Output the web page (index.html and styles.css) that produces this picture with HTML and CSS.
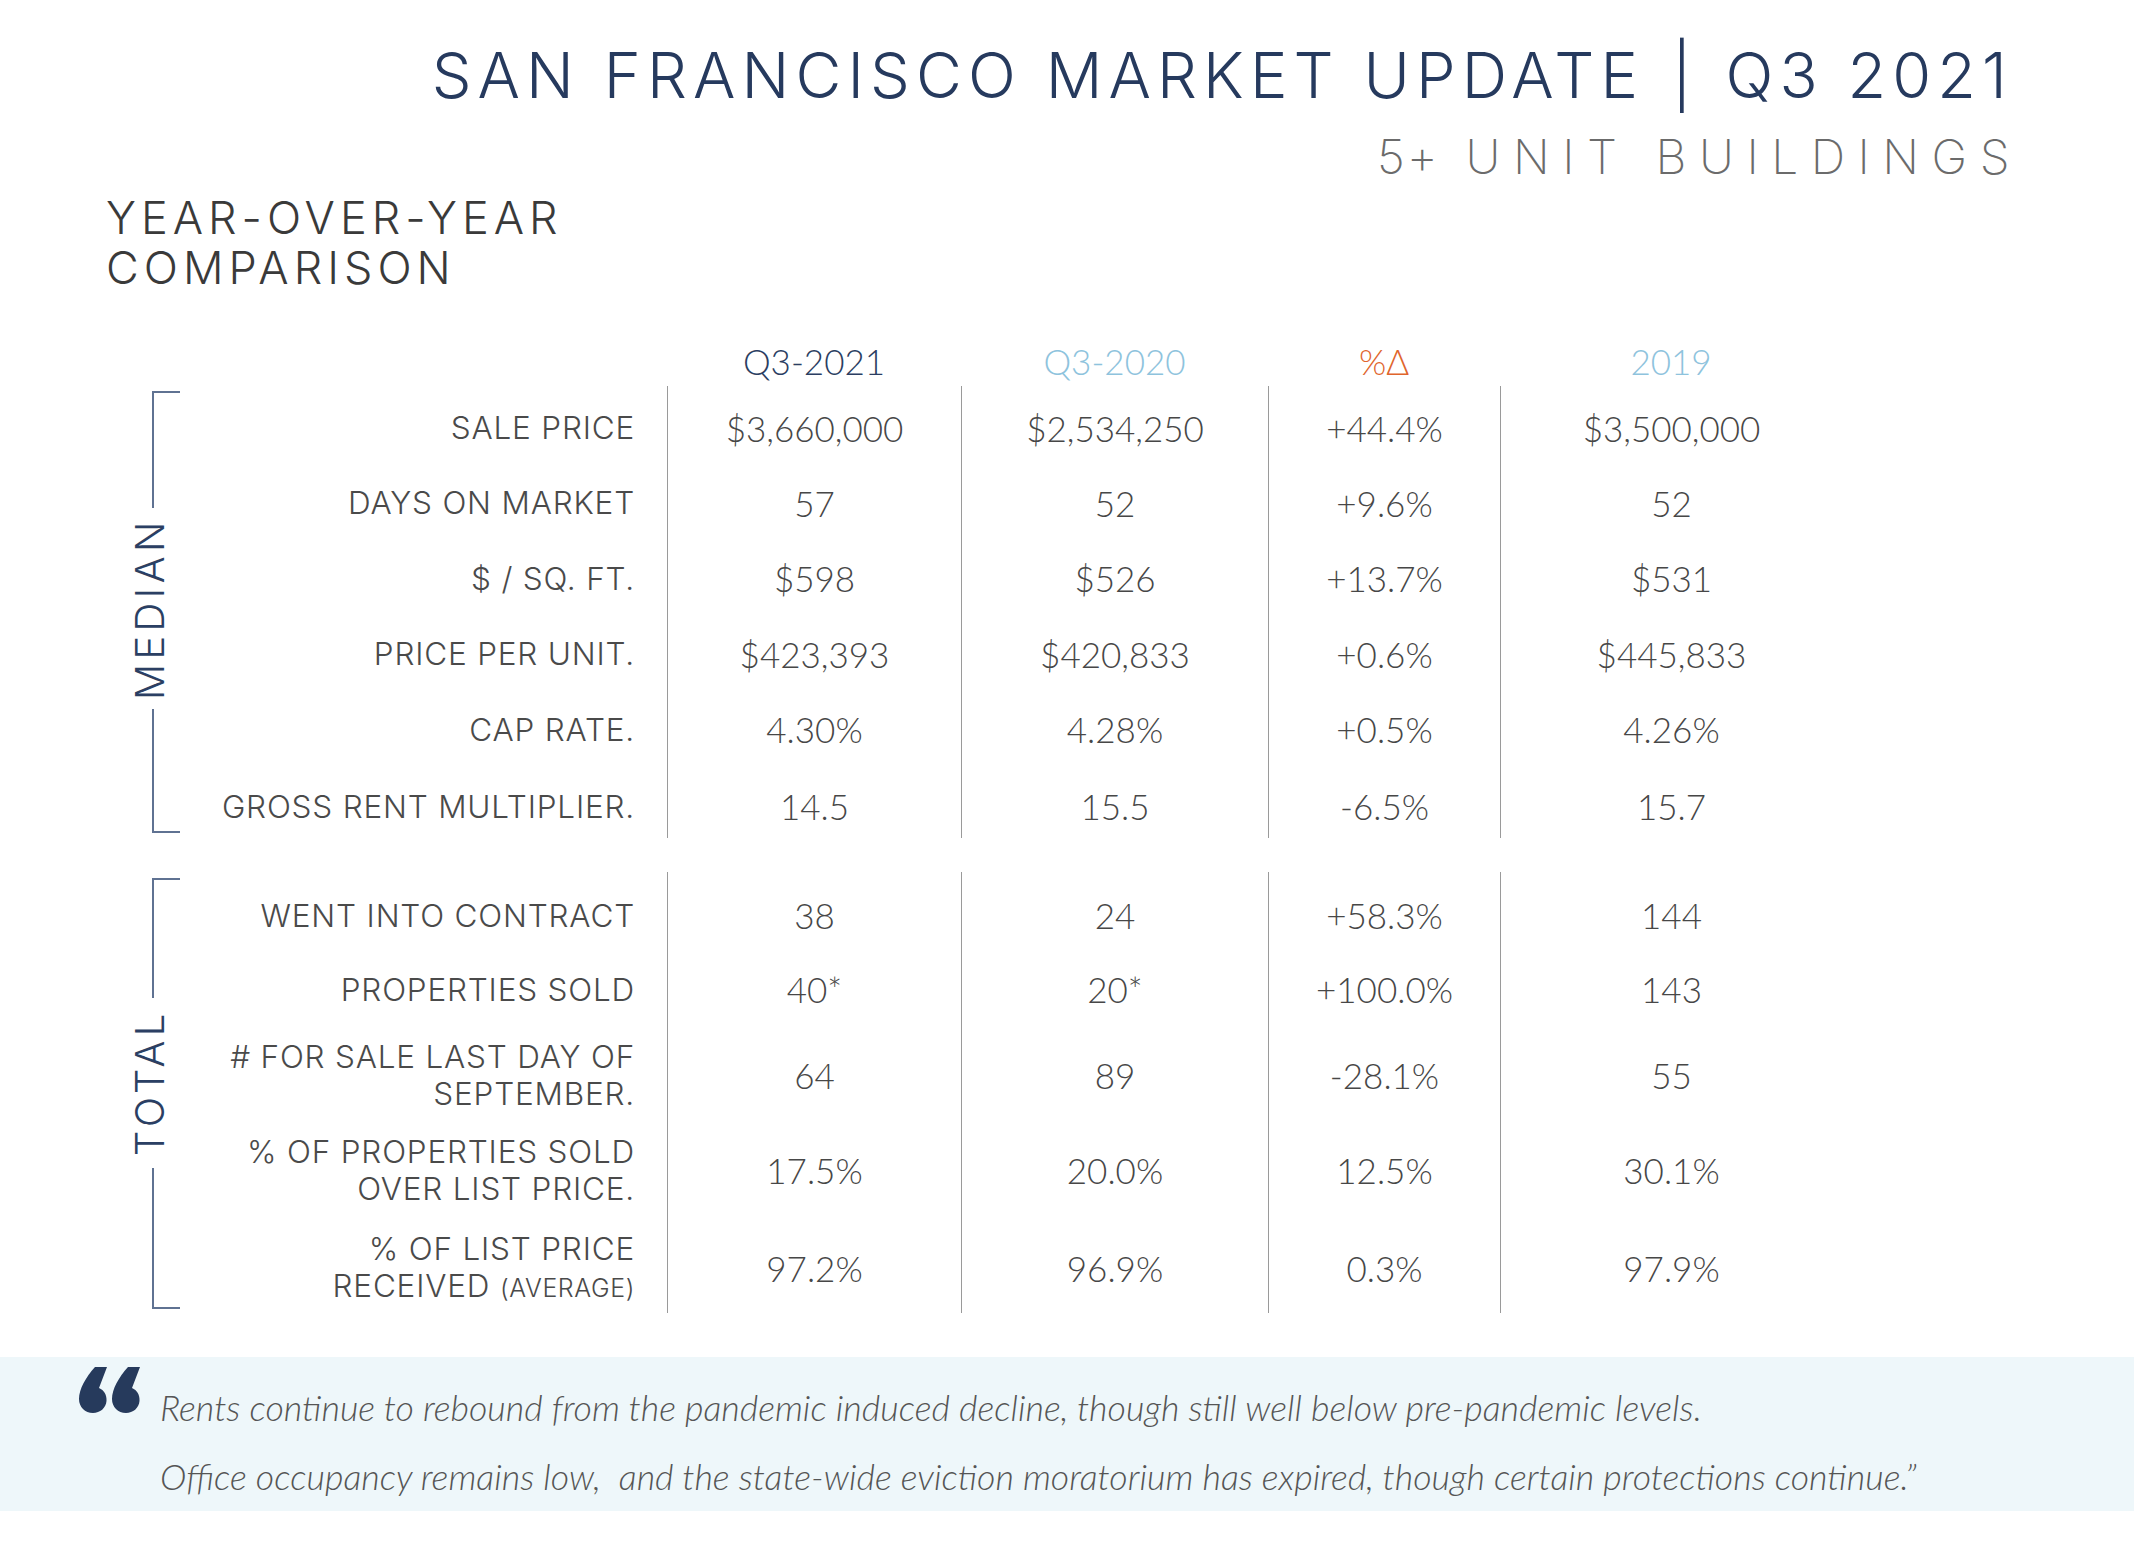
FILE: index.html
```html
<!DOCTYPE html>
<html lang="en">
<head>
<meta charset="utf-8">
<title>San Francisco Market Update | Q3 2021</title>
<link rel="stylesheet" href="styles.css">
</head>
<body>
<div class="page">
  <header class="masthead">
    <h1 class="title">SAN FRANCISCO MARKET UPDATE <span class="pipe">|</span> Q3 2021</h1>
    <p class="subtitle"><span class="tight">5+</span> UNIT BUILDINGS</p>
  </header>

  <h2 class="section-title">YEAR-OVER-YEAR<br>COMPARISON</h2>

  <section class="table">
    <div class="col-heads">
      <div></div>
      <div class="ch ch-current">Q3-2021</div>
      <div class="ch ch-prior">Q3-2020</div>
      <div class="ch ch-change">%Δ</div>
      <div class="ch ch-prior">2019</div>
    </div>

    <div class="group group-median">
      <div class="bracket">
        <div class="seg seg-top"></div>
        <div class="vlabel">MEDIAN</div>
        <div class="seg seg-bottom"></div>
      </div>
      <div class="rows rows-median">
        <div class="label"><span>SALE PRICE</span></div>
        <div class="val">$3,660,000</div><div class="val">$2,534,250</div><div class="val">+44.4%</div><div class="val">$3,500,000</div>

        <div class="label"><span>DAYS ON MARKET</span></div>
        <div class="val">57</div><div class="val">52</div><div class="val">+9.6%</div><div class="val">52</div>

        <div class="label"><span>$ / SQ. FT.</span></div>
        <div class="val">$598</div><div class="val">$526</div><div class="val">+13.7%</div><div class="val">$531</div>

        <div class="label"><span>PRICE PER UNIT.</span></div>
        <div class="val">$423,393</div><div class="val">$420,833</div><div class="val">+0.6%</div><div class="val">$445,833</div>

        <div class="label"><span>CAP RATE.</span></div>
        <div class="val">4.30%</div><div class="val">4.28%</div><div class="val">+0.5%</div><div class="val">4.26%</div>

        <div class="label"><span>GROSS RENT MULTIPLIER.</span></div>
        <div class="val">14.5</div><div class="val">15.5</div><div class="val">-6.5%</div><div class="val">15.7</div>
      </div>
    </div>

    <div class="group group-total">
      <div class="bracket">
        <div class="seg seg-top"></div>
        <div class="vlabel">TOTAL</div>
        <div class="seg seg-bottom"></div>
      </div>
      <div class="rows rows-total">
        <div class="label"><span>WENT INTO CONTRACT</span></div>
        <div class="val">38</div><div class="val">24</div><div class="val">+58.3%</div><div class="val">144</div>

        <div class="label"><span>PROPERTIES SOLD</span></div>
        <div class="val">40*</div><div class="val">20*</div><div class="val">+100.0%</div><div class="val">143</div>

        <div class="label"><span># FOR SALE LAST DAY OF<br>SEPTEMBER.</span></div>
        <div class="val">64</div><div class="val">89</div><div class="val">-28.1%</div><div class="val">55</div>

        <div class="label"><span>% OF PROPERTIES SOLD<br>OVER LIST PRICE.</span></div>
        <div class="val">17.5%</div><div class="val">20.0%</div><div class="val">12.5%</div><div class="val">30.1%</div>

        <div class="label"><span>% OF LIST PRICE<br>RECEIVED <small class="small">(AVERAGE)</small></span></div>
        <div class="val">97.2%</div><div class="val">96.9%</div><div class="val">0.3%</div><div class="val">97.9%</div>
      </div>
    </div>
  </section>

  <section class="quote">
    <svg class="quote-mark" viewBox="0 0 63 46" aria-hidden="true">
      <path d="M17 0H29L21 21C26 23 29 28 28.5 34C28 41 22 46 15 46C7 46 1 40 1 32C1 22 8 10 17 0Z M50 0H62L54 21C59 23 62 28 61.5 34C61 41 55 46 48 46C40 46 34 40 34 32C34 22 41 10 50 0Z" fill="#263a5c"/>
    </svg>
    <p class="quote-text">Rents continue to rebound from the pandemic induced decline, though still well below pre-pandemic levels.<br>Office occupancy remains low,&nbsp; and the state-wide eviction moratorium has expired, though certain protections continue.”</p>
  </section>
</div>
</body>
</html>
```

FILE: styles.css
```css
* { box-sizing: border-box; }

html, body {
  margin: 0;
  padding: 0;
  background: #ffffff;
}

body {
  width: 2134px;
  height: 1560px;
  overflow: hidden;
  font-family: "Inter", "Liberation Sans", sans-serif;
}

.page {
  padding-top: 37px;
}

/* ---------- masthead ---------- */
.masthead {
  display: flex;
  flex-direction: column;
  align-items: flex-end;
  padding-right: 121px;
}

.title {
  margin: 0;
  font-family: "Inter", "Liberation Sans", sans-serif;
  font-weight: 300;
  font-size: 63px;
  line-height: 76px;
  letter-spacing: 6.1px;
  color: #263a5e;
  white-space: nowrap;
}

.pipe {
  margin: 0 4px;
}

.subtitle {
  margin: 15px -9px 0 0;
  font-weight: 200;
  font-size: 48px;
  line-height: 58px;
  letter-spacing: 12.5px;
  color: #6b6b6b;
  white-space: nowrap;
}

.subtitle .tight {
  letter-spacing: 2px;
}

.section-title {
  margin: 7px 0 0 106px;
  font-weight: 300;
  font-size: 45px;
  line-height: 50px;
  letter-spacing: 5px;
  color: #3a3a3a;
}

/* ---------- table ---------- */
.table {
  margin-top: 37px;
}

.col-heads {
  display: grid;
  grid-template-columns: 667px 294px 307px 232px 342px;
  height: 56px;
  padding-top: 6px;
  align-items: center;
  font-family: "Lato", "Liberation Sans", sans-serif;
  font-weight: 300;
  font-size: 35px;
  text-align: center;
}

.ch-current { color: #2b3e62; }
.ch-prior { color: #8ec3dd; }
.ch-change { color: #e0652c; }

.group {
  display: flex;
}

.group-median { height: 452px; }
.group-total { height: 441px; margin-top: 34px; }

/* bracket with vertical label */
.bracket {
  width: 200px;
  flex: none;
  display: flex;
  flex-direction: column;
}

.seg {
  width: 28px;
  margin-left: 152px;
  border-left: 2px solid #5f7292;
}

.seg-top {
  border-top: 2px solid #5f7292;
}

.seg-bottom {
  flex: 1;
  border-bottom: 2px solid #5f7292;
}

.group-median .seg-top { margin-top: 5px; height: 117px; }
.group-median .vlabel { height: 201px; }
.group-median .seg-bottom { margin-bottom: 5px; }

.group-total .seg-top { margin-top: 6px; height: 120px; }
.group-total .vlabel { height: 170px; }
.group-total .seg-bottom { margin-bottom: 4px; }

.vlabel {
  width: 40px;
  margin-left: 130px;
  writing-mode: vertical-rl;
  transform: rotate(180deg);
  text-align: center;
  font-weight: 300;
  font-size: 40px;
  line-height: 40px;
  letter-spacing: 4.4px;
  color: #2b3f63;
}

/* rows */
.rows {
  display: grid;
  grid-template-columns: 467px 294px 307px 232px 342px;
}

.rows-median { grid-template-rows: 79px 75px 76px 75px 76px 71px; }
.rows-total { grid-template-rows: 80px 74px 98px 92px 97px; }

.rows-median > :nth-child(-n+5) { padding-top: 4px; }
.rows-median > :nth-last-child(-n+5) { padding-top: 7px; }
.rows-total > :nth-child(-n+5) { padding-top: 6px; }
.rows-total > :nth-last-child(-n+5) { padding-top: 7px; }

.label {
  display: flex;
  align-items: center;
  justify-content: flex-end;
  text-align: right;
  padding-right: 32px;
  font-family: "Inter", "Liberation Sans", sans-serif;
  font-weight: 300;
  font-size: 31.5px;
  line-height: 37px;
  letter-spacing: 0.8px;
  color: #4a4a4a;
}

.label .small {
  font-size: 25px;
  letter-spacing: 0.6px;
}

.val {
  display: flex;
  align-items: center;
  justify-content: center;
  border-left: 1px solid #9a9a9a;
  font-family: "Lato", "Liberation Sans", sans-serif;
  font-weight: 300;
  font-size: 35px;
  color: #474747;
}

/* ---------- quote ---------- */
.quote {
  margin-top: 44px;
  height: 154px;
  background: #eef7fa;
  display: flex;
  align-items: flex-start;
  gap: 19px;
  padding: 10px 0 0 78px;
}

.quote-mark {
  width: 63px;
  height: 46px;
  flex: none;
}

.quote-text {
  margin: 6px 0 0;
  font-family: "Lato", "Liberation Sans", sans-serif;
  font-style: italic;
  font-weight: 300;
  font-size: 35.8px;
  line-height: 69px;
  color: #555555;
  white-space: nowrap;
}
```
